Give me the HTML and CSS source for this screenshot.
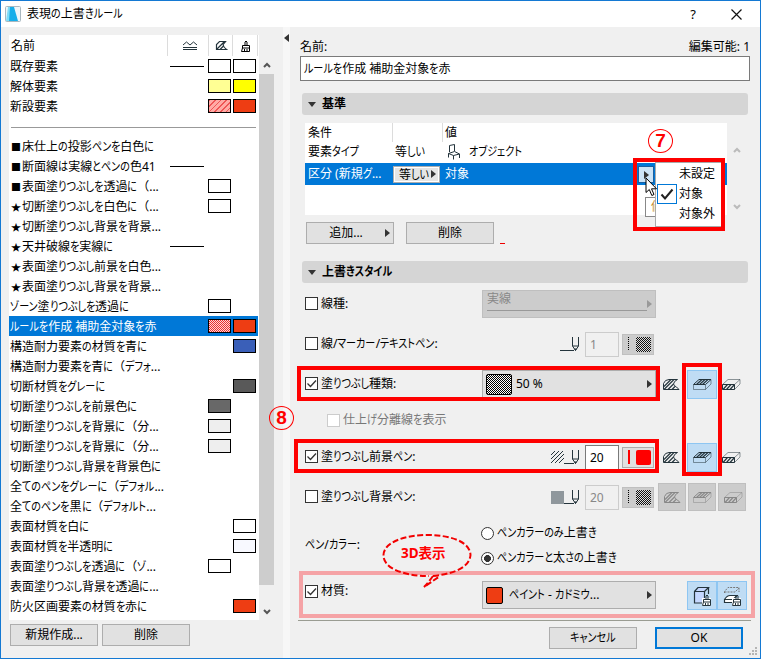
FILE: index.html
```
<!DOCTYPE html>
<html lang="ja">
<head>
<meta charset="utf-8">
<title>表現の上書きルール</title>
<link rel="stylesheet" href="styles.css">
</head>
<body>
<svg class="defs" aria-hidden="true">
  <defs>
    <pattern id="dots" width="2" height="2" patternUnits="userSpaceOnUse"><rect width="2" height="2" fill="#fff"/><rect width="1" height="1" fill="#000"/><rect x="1" y="1" width="1" height="1" fill="#000"/></pattern>
    <symbol id="cut" viewBox="0 0 18 13"><path d="M1.500 11.500V5.500Q3 1.500 7 1.500H15.500Q12 3 11.500 6Q12 8 14.500 9L17 11.500Z" fill="none" stroke="currentColor"/><path d="M2 8.500L9 1.500M2 11.500L12 1.500M6 11.500L11.500 6M10 11.500L13 8.500" stroke="currentColor" stroke-width="1.100" fill="none"/></symbol>
    <symbol id="boxtop" viewBox="0 0 20 13"><path d="M1.500 7V11.500H13.500L19 6V1.500M13.500 7V11.500" fill="none" stroke="currentColor" opacity=".5"/><path d="M1.500 6.500L7 1.500H19L13.500 6.500Z" fill="none" stroke="currentColor"/><path d="M4.500 6.500L10 1.500M7.500 6.500L13 1.500M10.500 6.500L16 1.500" stroke="currentColor" stroke-width="1.100"/></symbol>
    <symbol id="boxcut" viewBox="0 0 20 13"><path d="M1.500 6.500L7 1.500H19V6L13.500 11.500M13.500 6.500L19 1.500" fill="none" stroke="currentColor" opacity=".5"/><path d="M1.500 6.500H13.500V11.500H1.500Z" fill="none" stroke="currentColor"/><path d="M2 11.500L6.500 6.500M5.500 11.500L10 6.500M9 11.500L13.500 6.500" stroke="currentColor" stroke-width="1.200"/></symbol>
    <symbol id="pen" viewBox="0 0 20 15"><path d="M0 13.500H14" stroke="currentColor"/><path d="M12.500 0V9L15.500 13.500L18.500 9V0M12.500 9H18.500" fill="none" stroke="currentColor"/><path d="M14 11.500H17L15.500 14Z" fill="currentColor"/></symbol>
    <symbol id="brush" viewBox="0 0 10 12"><path d="M4 5V2Q5 0 6 2V5" fill="none" stroke="currentColor"/><path d="M1.500 5.500H8.500V8H1.500ZM1.500 8L.5 11.500H8.500V8M3.500 9V11M6 9V11" fill="none" stroke="currentColor"/></symbol>
    <symbol id="tick" viewBox="0 0 13 13"><path d="M2.500 6.500L5.500 9.500L11 3.500" fill="none" stroke="currentColor" stroke-width="1.300"/></symbol>
  </defs>
</svg>

<div class="window">
  <header class="titlebar">
    <svg class="app-icon" viewBox="0 0 16 16"><rect x=".5" y=".5" width="15" height="15" rx="1" fill="#eef6fa" stroke="#a9b8c0"/><path d="M3 1H8L4 15H1Z" fill="#7fdcf8"/><path d="M5 1H9L13 15H4Z" fill="#16aeea"/></svg>
    <h1>表現の上書きルール</h1>
    <span class="help">?</span>
    <svg class="close" viewBox="0 0 11 11"><path d="M.5 .5L10.500 10.500M10.500 .5L.5 10.500" stroke="#111" stroke-width="1.200"/></svg>
  </header>

  <div class="content">
    <aside class="side">
      <div class="list-wrap">
        <div class="list">
          <div class="list-head">
            <span class="c-name">名前</span>
            <span class="c-line"><svg width="14" height="10" viewBox="0 0 14 10"><path d="M0 4L3.500 1L7 4L10.500 1L14 4" fill="none" stroke="#24343c"/><path d="M0 6.500H14M0 8.500H14" stroke="#24343c" stroke-width="1.200"/></svg></span>
            <span class="c-fill"><svg width="13" height="11" viewBox="0 0 13 11"><path d="M1.500 9.500V4.500L4.500 1.500H10.500L8 4.500Q8.500 7.500 11.500 9.500Z" fill="none" stroke="#24343c" stroke-width="1.200"/><path d="M2 9L9 2M5 9.500L8.500 6" stroke="#24343c" stroke-width="1.200"/></svg></span>
            <span class="c-mat"><svg width="10" height="12"><use href="#brush"/></svg></span>
          </div>
          <div class="row"><span class="t">既存要素</span><i class="ln"></i><i class="sw white"></i><i class="sw white"></i></div>
          <div class="row"><span class="t">解体要素</span><i class="sw paleyellow"></i><i class="sw yellow"></i></div>
          <div class="row"><span class="t">新設要素</span><i class="sw hatch"></i><i class="sw red"></i></div>
          <div class="row sep"></div>
          <div class="row mark"><span class="t"><b>■</b>床仕上の投影ペンを白色に</span></div>
          <div class="row mark"><span class="t"><b>■</b>断面線は実線とペンの色41</span><i class="ln"></i><i class="sw none"></i><i class="sw none"></i></div>
          <div class="row mark"><span class="t"><b>■</b>表面塗りつぶしを透過に（...</span><i class="sw white"></i><i class="sw none"></i></div>
          <div class="row mark"><span class="t"><b>★</b>切断塗りつぶしを白色に（...</span><i class="sw white"></i><i class="sw none"></i></div>
          <div class="row mark"><span class="t"><b>★</b>切断塗りつぶし背景を背景...</span></div>
          <div class="row mark"><span class="t"><b>★</b>天井破線を実線に</span><i class="ln"></i><i class="sw none"></i><i class="sw none"></i></div>
          <div class="row mark"><span class="t"><b>★</b>表面塗りつぶし前景を白色...</span></div>
          <div class="row mark"><span class="t"><b>★</b>表面塗りつぶし背景を背景...</span></div>
          <div class="row"><span class="t">ゾーン塗りつぶしを透過に</span><i class="sw white"></i><i class="sw none"></i></div>
          <div class="row selected"><span class="t">ルールを作成 補助金対象を赤</span><i class="sw reddots"></i><i class="sw red"></i></div>
          <div class="row"><span class="t">構造耐力要素の材質を青に</span><i class="sw blue"></i></div>
          <div class="row"><span class="t">構造耐力要素を青に（デフォ...</span></div>
          <div class="row"><span class="t">切断材質をグレーに</span><i class="sw dark"></i></div>
          <div class="row"><span class="t">切断塗りつぶしを前景色に</span><i class="sw gray"></i><i class="sw none"></i></div>
          <div class="row"><span class="t">切断塗りつぶしを背景に（分...</span><i class="sw light"></i><i class="sw none"></i></div>
          <div class="row"><span class="t">切断塗りつぶしを背景に（分...</span><i class="sw light"></i><i class="sw none"></i></div>
          <div class="row"><span class="t">切断塗りつぶし背景を背景色に</span></div>
          <div class="row"><span class="t">全てのペンをグレーに（デフォル...</span></div>
          <div class="row"><span class="t">全てのペンを黒に（デフォルト...</span></div>
          <div class="row"><span class="t">表面材質を白に</span><i class="sw white"></i></div>
          <div class="row"><span class="t">表面材質を半透明に</span><i class="sw glass"></i></div>
          <div class="row"><span class="t">表面塗りつぶしを透過に（ゾ...</span><i class="sw white"></i><i class="sw none"></i></div>
          <div class="row"><span class="t">表面塗りつぶし背景を透過に...</span></div>
          <div class="row"><span class="t">防火区画要素の材質を赤に</span><i class="sw red"></i></div>
        </div>
        <div class="scroll">
          <svg width="8" height="6" viewBox="0 0 8 6"><path d="M1 5L4 2L7 5" fill="none" stroke="#555" stroke-width="2"/></svg>
          <div class="thumb"></div>
          <svg class="down" width="8" height="6" viewBox="0 0 8 6"><path d="M1 1L4 4L7 1" fill="none" stroke="#555" stroke-width="2"/></svg>
        </div>
      </div>
      <div class="side-buttons"><button>新規作成...</button><button>削除</button></div>
    </aside>
    <div class="splitter"><svg width="5" height="8" viewBox="0 0 5 8"><path d="M5 0V8L0 4Z" fill="#333"/></svg></div>

    <main class="main">
      <div class="name-row"><label>名前:</label><span>編集可能: 1</span></div>
      <div class="name-input">ルールを作成 補助金対象を赤</div>
      <h2 class="section"><i class="tri"></i>基準</h2>
      <div class="criteria">
        <div class="table">
          <div class="tr th"><span>条件</span><span></span><span>値</span></div>
          <div class="tr first"><span>要素タイプ</span><span>等しい</span><span><svg class="chair" width="12" height="16" viewBox="0 0 12 16"><path d="M1.500 8V1.500L6.500 .5V7M.5 9.500L6.500 7.500L11.500 10L5.500 11.500ZM.5 9.500V13.500M5.500 11.500V15.500M11.500 10V14" fill="none" stroke="#24343c"/></svg>オブジェクト</span></div>
          <div class="tr on"><span>区分 (新規グ...</span><span><em><span>等しい</span><i class="rt"></i></em></span><span>対象</span></div>
        </div>
        <div class="tscroll"><svg width="8" height="6" viewBox="0 0 8 6"><path d="M1 5L4 2L7 5" fill="none" stroke="#bbb" stroke-width="2"/></svg><svg width="8" height="6" viewBox="0 0 8 6"><path d="M1 1L4 4L7 1" fill="none" stroke="#bbb" stroke-width="2"/></svg></div>
      </div>
      <div class="criteria-buttons"><button class="add">追加...<i class="rt"></i></button><button>削除</button><i class="dash"></i></div>
      <h2 class="section second"><i class="tri"></i><span>上書きスタイル</span></h2>

      <div class="opt"><label><i class="cb"></i><span>線種:</span></label><div class="drop disabled"><span>実線</span><i class="rt"></i></div></div>
      <div class="opt"><label><i class="cb"></i><span>線/マーカー/テキストペン:</span></label>
        <div class="pens"><svg class="penicon" width="20" height="15"><use href="#pen"/></svg><div class="num off">1</div><div class="penbox off"><i class="pl"></i><i class="dots"></i></div></div></div>
      <div class="opt"><label><i class="cb"><svg><use href="#tick"/></svg></i><span>塗りつぶし種類:</span></label>
        <div class="drop"><svg class="fillsw" width="26" height="21"><rect x=".5" y=".5" width="25" height="20" rx="1.500" fill="url(#dots)" stroke="#000"/></svg>50 %<i class="rt"></i></div>
        <div class="tools"><span><svg width="18" height="13"><use href="#cut"/></svg></span><span class="act"><svg width="20" height="13"><use href="#boxtop"/></svg></span><span><svg width="20" height="13"><use href="#boxcut"/></svg></span></div></div>
      <div class="opt sub"><label><i class="cb"></i><span>仕上げ分離線を表示</span></label></div>
      <div class="opt"><label><i class="cb"><svg><use href="#tick"/></svg></i><span>塗りつぶし前景ペン:</span></label>
        <div class="pens"><svg class="hat" width="13" height="12" viewBox="0 0 13 12"><path d="M0 4L4 0M0 8L8 0M0 12L12 0M4 12L13 3M8 12L13 7" stroke="#24343c"/></svg><svg class="penicon" width="16" height="15" viewBox="4 0 16 15"><use href="#pen" width="20" height="15"/></svg><div class="num">20</div><div class="penbox"><i class="pl"></i><i class="solid"></i></div></div>
        <div class="tools"><span><svg width="18" height="13"><use href="#cut"/></svg></span><span class="act"><svg width="20" height="13"><use href="#boxtop"/></svg></span><span><svg width="20" height="13"><use href="#boxcut"/></svg></span></div></div>
      <div class="opt"><label><i class="cb"></i><span>塗りつぶし背景ペン:</span></label>
        <div class="pens"><i class="graysq"></i><svg class="penicon" width="16" height="15" viewBox="4 0 16 15"><use href="#pen" width="20" height="15"/></svg><div class="num off">20</div><div class="penbox off"><i class="pl"></i><i class="dots"></i></div></div>
        <div class="tools off"><span><svg width="18" height="13"><use href="#cut"/></svg></span><span><svg width="20" height="13"><use href="#boxtop"/></svg></span><span><svg width="20" height="13"><use href="#boxcut"/></svg></span></div></div>
      <div class="opt pencolor"><label><span>ペン/カラー:</span></label>
        <div class="radios"><div><i class="radio"></i><span>ペンカラーのみ上書き</span></div><div><i class="radio on"></i><span>ペンカラーと太さの上書き</span></div></div></div>
      <div class="opt material"><label><i class="cb"><svg><use href="#tick"/></svg></i><span>材質:</span></label>
        <div class="drop"><i class="matsw"></i><span class="paint">ペイント - カドミウ...</span><i class="rt"></i></div>
        <div class="tools pair"><span class="act"><svg width="19" height="20" viewBox="0 0 19 20"><path d="M1.500 5.500H11.500V17H1.500ZM1.500 5.500L5 1.500H15.500L11.500 5.500M15.500 1.500V8" fill="#c5d8ff" stroke="#24343c" stroke-width="1.200"/><rect x="9" y="12" width="9" height="8" fill="#fff"/><use href="#brush" x="9" y="8" width="10" height="12"/></svg></span><span class="act"><svg width="19" height="20" viewBox="0 0 19 20"><path d="M1.500 7V5.500L5 1.500H16V6M1.500 6H12L16 2" fill="none" stroke="#777" stroke-dasharray="2 1"/><path d="M1.500 13.500Q4 9.500 7 9.500H14L10 13.500V16.500H1.500ZM1.500 13.500H10" fill="#fff" stroke="#24343c" stroke-width="1.200"/><rect x="9" y="12" width="9" height="8" fill="#fff"/><use href="#brush" x="9" y="8" width="10" height="12"/></svg></span></div></div>
      <footer class="foot"><button>キャンセル</button><button class="ok">OK</button></footer>
    </main>
  </div>

  <div class="menu">
    <div>未設定</div><div><i class="chk"><svg width="14" height="13" viewBox="0 0 14 13"><path d="M1.500 6.500L5 10.500L12.500 1.500" fill="none" stroke="#222" stroke-width="2"/></svg></i>対象</div><div>対象外</div>
  </div>
  <i class="cellbtn"><b class="rt"></b></i>
  <span class="tip">値</span>
  <svg class="cursor" width="13" height="20" viewBox="0 0 13 20"><path d="M1 1V15.500L4.300 12.500L6.800 18.500L9 17.500L6.500 11.800H11.500Z" fill="#fff" stroke="#000"/></svg>
  <svg class="grip" width="9" height="9" viewBox="0 0 9 9"><path d="M6 0H8V2H6ZM3 3H5V5H3ZM6 3H8V5H6ZM0 6H2V8H0ZM3 6H5V8H3ZM6 6H8V8H6Z" fill="#b5b5b5"/></svg>

  <div class="mark-box m1"></div>
  <div class="mark-box m2"></div>
  <div class="mark-box m3"></div>
  <div class="mark-box m4"></div>
  <div class="mark-box m5"></div>
  <div class="circ n7">7</div>
  <div class="circ n8">8</div>
  <div class="bubble"><svg width="92" height="60" viewBox="0 0 92 60"><path d="M52 44Q88 40 89.500 23C89 9 68 3 46 3S3 10 2.500 23S22 44 48 44M52 44Q47 51 43 55Q49 51 59 44" fill="none" stroke="#f20000" stroke-width="2" stroke-dasharray="6 2.500"/></svg><span>3D表示</span></div>
</div>
<script src="kana.js"></script>
</body>
</html>
```
FILE: kana.js
```
// Condense runs of kana so they set narrower than the kanji, as in a UI typeface.
(function () {
  var SCALE = 0.84;
  var walker = document.createTreeWalker(document.querySelector('.window'), NodeFilter.SHOW_TEXT);
  var nodes = [];
  while (walker.nextNode()) {
    if (/[ぁ-ゖァ-ー（]/.test(walker.currentNode.data)) nodes.push(walker.currentNode);
  }
  nodes.forEach(function (node) {
    var box = document.createElement('span');
    box.className = 'run';
    node.data.split(/([ぁ-ゖァ-ー]+|（)/).forEach(function (part) {
      if (!part) return;
      if (!/[ぁ-ゖァ-ー（]/.test(part)) { box.appendChild(document.createTextNode(part)); return; }
      var s = document.createElement('span');
      s.className = part === '（' ? 'paren' : 'kana';
      s.textContent = part;
      box.appendChild(s);
    });
    node.parentNode.replaceChild(box, node);
  });
  document.querySelectorAll('.kana').forEach(function (s) {
    var w = s.getBoundingClientRect().width;
    s.style.marginRight = (-w * (1 - SCALE)).toFixed(2) + 'px';
    s.style.transform = 'scaleX(' + SCALE + ')';
  });
})();
```
FILE: styles.css
```
* { box-sizing: border-box; }
body { margin: 0; font: 12px/20px "Noto Sans", "Noto Sans CJK JP", sans-serif; font-feature-settings: "palt"; color: #000; white-space: nowrap; }
i, em { font-style: normal; flex: none; }
svg { flex: none; display: block; }
.defs { position: absolute; width: 0; height: 0; }
.window .run, .window .run span { all: unset; white-space: pre; font-feature-settings: "palt"; }
.window .run .kana { display: inline-block; transform-origin: 0 50%; }
.window .run .paren { font-feature-settings: normal; }
.window { position: relative; width: 761px; height: 659px; border: 1px solid #1479d3; background: #f0f0f0; overflow: hidden; display: flex; flex-direction: column; }
.titlebar { height: 26px; background: #fff; display: flex; align-items: center; padding: 0 18px 0 4px; }
.app-icon { width: 16px; height: 16px; }
h1 { margin: 0 auto 0 6px; font-size: 12px; font-weight: 400; }
.help { font-size: 13px; margin-right: 35px; }
.close { width: 11px; height: 11px; }
.content { display: flex; height: 631px; }
.side { width: 282px; padding: 8px 0 0 8px; }
.list-wrap { display: flex; height: 585px; }
.list { width: 250px; background: #fff; }
.list-head { display: flex; height: 21px; }
.list-head > span { display: flex; align-items: center; justify-content: center; border-left: 1px solid #dcdcdc; }
.list-head .c-name { width: 158px; border: 0; justify-content: flex-start; padding-left: 2px; }
.c-line { width: 41px; padding-left: 3px; } .c-fill { width: 24px; padding-left: 2px; } .c-mat { width: 26px; padding-left: 2px; border-right: 1px solid #dcdcdc; }
.row { height: 20px; display: flex; align-items: center; padding: 0 2px 0 1px; width: 249px; }
.row .t { margin-right: auto; line-height: 20px; padding-top: 2px; height: 22px; }
.mark .t { padding-left: 1px; }
.mark b { display: inline-block; width: 11px; font-weight: 400; font-size: 10px; }
.sw { width: 23px; height: 14px; border: 1px solid #000; margin-left: 2px; }
.ln { width: 34px; height: 1px; background: #000; margin: 1px 2px 0 0; }
.none { visibility: hidden; }
.white { background: #fff; } .yellow { background: #ff0; } .red { background: #ee3d13; } .blue { background: #3a5fb8; }
.dark { background: #595959; } .gray { background: #686868; } .light { background: #eee; } .glass { background: #f8f9ff; }
.paleyellow { background: #ffff94; }
.hatch { background: repeating-linear-gradient(135deg, #e55 0 1px, #ffaaa5 1px 4px); }
.reddots { background: repeating-conic-gradient(#e83232 0 25%, #ffd8d8 0 50%) 0 0 / 2px 2px; }
.sep { width: 245px; height: 20px; margin-left: 2px; background: linear-gradient(#999, #999) 0 11px / 100% 1px no-repeat; }
.selected { background: #0078d7; color: #fff; }
.scroll { width: 15px; display: flex; flex-direction: column; align-items: center; padding: 27px 0 5px; }
.thumb { width: 15px; height: 511px; margin-top: 6px; background: #cdcdcd; }
.down { margin-top: auto; }
button { font: inherit; font-feature-settings: inherit; color: #000; padding: 0; width: 88px; height: 22px; line-height: 18px; border: 1px solid #adadad; background: #e1e1e1; display: flex; align-items: center; justify-content: center; }
.side-buttons { display: flex; gap: 4px; padding: 4px 0 0 1px; }
.splitter { width: 7px; background: #f7f7f7; padding: 7px 0 0 1px; }
.main { width: 470px; padding: 9px 10px 0 10px; }
.name-row { display: flex; justify-content: space-between; height: 19px; margin: 1px 0 0; }
.name-input { height: 25px; border: 1px solid #7a7a7a; background: #fff; padding: 0 3px; line-height: 24px; width: 450px; }
.section { margin: 12px 0 0 2px; width: 446px; height: 22px; border-radius: 3px; background: #d5d5d5; font-size: 12px; line-height: 22px; font-weight: 700; display: flex; align-items: center; }
.tri { border: 4px solid transparent; border-top: 5px solid #333; border-bottom: 0; margin: 0 6px; }
.rt { border: 4px solid transparent; border-left: 5px solid #333; border-right: 0; flex: none; }
.criteria { display: flex; margin: 8px 0 0 5px; height: 92px; }
.table { width: 422px; background: #fff; }
.tr { display: flex; height: 22px; align-items: center; }
.tr > span { width: 87px; padding-left: 4px; }
.tr > span:first-child { padding-left: 3px; }
.tr > span + span { width: 50px; padding-left: 3px; }
.tr > span:last-child { width: 285px; display: flex; align-items: center; padding-left: 3px; }
.th { height: 19px; align-items: stretch; }
.th > span + span { border-left: 1px solid #dcdcdc; }
.th > span:last-child { padding-left: 2px; }
.first { height: 21px; padding-bottom: 2px; }
.tr.on { background: #0078d7; color: #fff; }
.on em { display: flex; align-items: center; justify-content: space-between; width: 47px; height: 17px; margin-left: -2px; border: 1px solid #adadad; outline: 1px solid #fff; outline-offset: -2px; background: #e5e5e5; color: #000; padding: 0 3px 0 5px; line-height: 15px; }
.chair { margin: 1px 9px 0 3px; }
.tscroll { width: 19px; display: flex; flex-direction: column; align-items: center; justify-content: space-between; padding: 24px 0 5px; }
.criteria-buttons { display: flex; gap: 12px; margin: 7px 0 0 6px; }
.add { position: relative; padding-right: 8px; }
.add .rt { position: absolute; right: 3px; }
.dash { width: 5px; height: 1px; background: #e00; align-self: flex-end; margin: 0 0 0 -6px; }
.second { margin-top: 17px; margin-bottom: 1px; }
.opt { display: flex; height: 40px; align-items: center; padding-left: 5px; position: relative; }
.opt label { width: 177px; display: flex; align-items: center; gap: 3px; margin-top: -1px; }
.cb { width: 13px; height: 13px; border: 1px solid #333; background: #fff; }
.cb svg { width: 13px; height: 13px; margin: -1px; color: #333; }
.drop { width: 174px; height: 28px; border: 1px solid #adadad; background: #e1e1e1; display: flex; align-items: center; padding: 0 3px; }
.drop .rt { margin-left: auto; }
.drop.disabled { background: #ccc; border-color: #bfbfbf; color: #888; padding-left: 4px; }
.drop.disabled span { width: 161px; height: 20px; border-bottom: 1px solid #999; line-height: 15px; margin: 0 0 6px; }
.drop.disabled .rt { border-left-color: #999; }
.fillsw { margin-right: 4px; }
.pens { width: 174px; display: flex; align-items: center; justify-content: flex-end; color: #24343c; padding-right: 2px; }
.penicon { margin-right: 5px; }
.num { width: 34px; height: 25px; border: 1px solid #7a7a7a; background: #fff; padding-left: 4px; line-height: 23px; margin-right: 3px; color: #000; font-size: 12px; }
.num.off { background: #f0f0f0; border: 1px solid #ccc; color: #888; }
.penbox { width: 32px; height: 21px; background: #e1e1e1; border: 1px solid #adadad; display: flex; align-items: center; justify-content: space-between; padding: 0 2px 0 5px; }
.penbox.off { background: #ccc; border-color: #bfbfbf; }
.pl { width: 1px; height: 14px; background: repeating-linear-gradient(#000 0 1px, #ccc 1px 2px); }
.dots { width: 15px; height: 15px; background: repeating-conic-gradient(#111 0 25%, #ddd 0 50%) 0 0 / 2px 2px; }
.penbox:not(.off) .pl { width: 2px; background: red; }
.solid { width: 15px; height: 15px; border-radius: 2px; background: red; }
.graysq { width: 13px; height: 13px; background: #8f979c; }
.tools { display: flex; margin-left: 0; color: #24343c; }
.tools span { width: 30px; height: 29px; display: flex; align-items: center; justify-content: center; }
.tools span:last-child:not(.act) { justify-content: flex-start; padding-left: 4px; }
.tools .act { background: #bfdcf4; border: 1px solid #8ec6f2; margin-left: 1px; }
.tools.off { gap: 2px; margin-left: 2px; color: #888; }
.tools.off span { width: 28px; height: 28px; background: #ccc; border: 1px solid #bfbfbf; }
.tools.pair { margin-left: 31px; }
.tools.pair .act { margin: 0; }
.sub { height: 33px; padding-left: 27px; color: #777; }
.sub .cb { border-color: #ccc; }
.pencolor { height: 54px; }
.pencolor label { padding-top: 3px; }
.radios { display: flex; flex-direction: column; gap: 5px; padding-top: 5px; }
.radios div { display: flex; align-items: center; gap: 3px; height: 20px; margin: -1px 0 1px -1px; }
.radio { width: 13px; height: 13px; border: 1px solid #333; border-radius: 50%; background: #fff; }
.radio.on { background: radial-gradient(circle, #333 0 3.200px, #fff 3.700px); }
.material { height: 49px; }
.material label { margin-top: -9px; }
.material .drop { margin-top: -1px; }
.matsw { width: 17px; height: 17px; border: 1px solid #000; border-radius: 2px; background: #ee3d13; margin-right: 6px; }
.foot { border-top: 1px solid #9a9c92; margin-left: -2px; width: 453px; display: flex; justify-content: flex-end; gap: 18px; padding: 6px 8px 0 0; }
.ok { border: 2px solid #0078d7; }
.menu { position: absolute; left: 654px; top: 161px; width: 67px; height: 65px; background: #fff; border: 1px solid #aaa; padding: 1px 0 0 23px; z-index: 3; }
.menu div { height: 20px; }
.chk { position: absolute; left: 1px; top: 21px; width: 20px; height: 20px; border: 1px solid #0078d7; display: flex; align-items: center; justify-content: center; }
.cellbtn { position: absolute; left: 637px; top: 165px; width: 16px; height: 17px; background: #cce4f7; border: 1px solid #1a5fa0; display: flex; align-items: center; justify-content: center; }
.tip { position: absolute; left: 644px; top: 196px; width: 26px; height: 20px; border: 1px solid #888; background: #fff; color: #c89030; padding-left: 5px; line-height: 18px; }
.cursor { position: absolute; left: 644px; top: 176px; z-index: 4; }
.grip { position: absolute; right: 2px; bottom: 2px; }
.mark-box { position: absolute; border: 4px solid #fe0000; z-index: 5; }
.m1 { left: 632px; top: 157px; width: 92px; height: 73px; }
.m2 { left: 296px; top: 365px; width: 363px; height: 35px; }
.m3 { left: 293px; top: 438px; width: 365px; height: 34px; }
.m4 { left: 681px; top: 362px; width: 40px; height: 113px; }
.m5 { left: 298px; top: 570px; width: 456px; height: 47px; border-color: #f5a3a6; z-index: 4; }
.circ { position: absolute; width: 25px; height: 24px; border: 1.500px solid #f00; border-radius: 50%; color: #f00; font: 700 19px/21px "Liberation Sans", sans-serif; text-align: center; }
.n7 { left: 647px; top: 128px; } .n8 { left: 268px; top: 405px; }
.bubble { position: absolute; left: 380px; top: 531px; width: 92px; height: 60px; z-index: 6; }
.bubble span { position: absolute; left: 20px; top: 11px; color: #f00; font-weight: 700; font-size: 13.500px; line-height: 20px; }
```
